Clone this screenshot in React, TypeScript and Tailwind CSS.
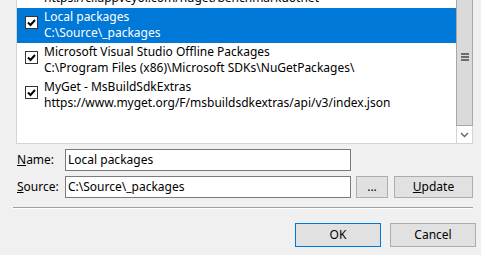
import React from "react";

type Source = {
  name: string;
  url: string;
  checked: boolean;
};

const sources: Source[] = [
  { name: "BenchmarkDotNet", url: "https://ci.appveyor.com/nuget/benchmarkdotnet", checked: true },
  { name: "Local packages", url: "C:\\Source\\_packages", checked: true },
  {
    name: "Microsoft Visual Studio Offline Packages",
    url: "C:\\Program Files (x86)\\Microsoft SDKs\\NuGetPackages\\",
    checked: true,
  },
  {
    name: "MyGet - MsBuildSdkExtras",
    url: "https://www.myget.org/F/msbuildsdkextras/api/v3/index.json",
    checked: true,
  },
];

const CheckBox = ({ checked }: { checked: boolean }) => (
  <div className="w-[13px] h-[13px] border border-[#333333] bg-white flex items-center justify-center shrink-0">
    {checked && (
      <svg width="11" height="11" viewBox="0 0 11 11">
        <path d="M2 5.5 L4.5 8 L9 3" fill="none" stroke="#000" strokeWidth="2" />
      </svg>
    )}
  </div>
);

const App: React.FC = () => {
  const selected = 1;

  return (
    <div
      className="w-[481px] h-[255px] bg-[#f0f0f0] overflow-hidden flex flex-col text-[12px] text-black"
      style={{ fontFamily: '"Noto Sans", "Segoe UI", sans-serif' }}
    >
      {/* source list */}
      <div className="ml-[16px] w-[457px] h-[144px] border-l border-b border-[#d4d4d4] bg-white flex shrink-0">
        <div className="flex-1 overflow-hidden">
          <div className="flex flex-col mt-[-27px]">
            {sources.map((s, i) => (
              <div
                key={s.name}
                className={`h-[35px] flex items-start pl-[8px] ${
                  i === selected ? "bg-[#0078d7] text-white" : ""
                }`}
              >
                <div className="pt-[8px]">
                  <CheckBox checked={s.checked} />
                </div>
                <div className="pl-[6px] pt-[1px] flex flex-col leading-[16px] whitespace-nowrap">
                  <span>{s.name}</span>
                  <span>{s.url}</span>
                </div>
              </div>
            ))}
          </div>
        </div>
        {/* scrollbar */}
        <div className="w-[17px] flex flex-col">
          <div className="flex-1 bg-[#dadada] border-l border-r border-b border-[#a8a8a8] flex items-center justify-center">
            <div className="flex flex-col gap-[1px] mt-[-11px]">
              <div className="w-[8px] h-[2px] bg-[#6d6d6d]" />
              <div className="w-[8px] h-[2px] bg-[#6d6d6d]" />
              <div className="w-[8px] h-[2px] bg-[#6d6d6d]" />
            </div>
          </div>
          <div className="h-[17px] bg-white border-l border-r border-[#d4d4d4] flex items-center justify-center">
            <svg width="9" height="6" viewBox="0 0 9 6">
              <path d="M1 1 L4.5 4.5 L8 1" fill="none" stroke="#606060" strokeWidth="1.3" />
            </svg>
          </div>
        </div>
      </div>

      {/* name row */}
      <div className="flex items-center mt-[5px] pl-[17px] h-[22px]">
        <span className="w-[48px]">
          <span className="underline">N</span>ame:
        </span>
        <div className="w-[286px] h-[22px] border border-[#7a7a7a] bg-white flex items-center pl-[2px]">
          Local packages
        </div>
      </div>

      {/* source row */}
      <div className="flex items-center mt-[5px] pl-[17px] h-[22px]">
        <span className="w-[48px]">
          <span className="underline">S</span>ource:
        </span>
        <div className="w-[286px] h-[22px] border border-[#7a7a7a] bg-white flex items-center pl-[2px]">
          C:\Source\_packages
        </div>
        <button className="ml-[5px] w-[32px] h-[22px] border border-[#adadad] bg-[#e1e1e1] flex items-center justify-center">
          ...
        </button>
        <button className="ml-[6px] w-[79px] h-[22px] border border-[#adadad] bg-[#e1e1e1] flex items-center justify-center">
          <span className="underline">U</span>pdate
        </button>
      </div>

      {/* separator */}
      <div className="ml-[13px] w-[460px] mt-[9px] border-t border-[#a0a0a0] border-b border-b-white" />

      {/* dialog buttons */}
      <div className="flex gap-[9px] pl-[295px] mt-[14px]">
        <button className="w-[86px] h-[24px] border border-[#0078d7] bg-[#e1e1e1] flex items-center justify-center">
          OK
        </button>
        <button className="w-[86px] h-[24px] border border-[#adadad] bg-[#e1e1e1] flex items-center justify-center">
          Cancel
        </button>
      </div>
    </div>
  );
};

export default App;
